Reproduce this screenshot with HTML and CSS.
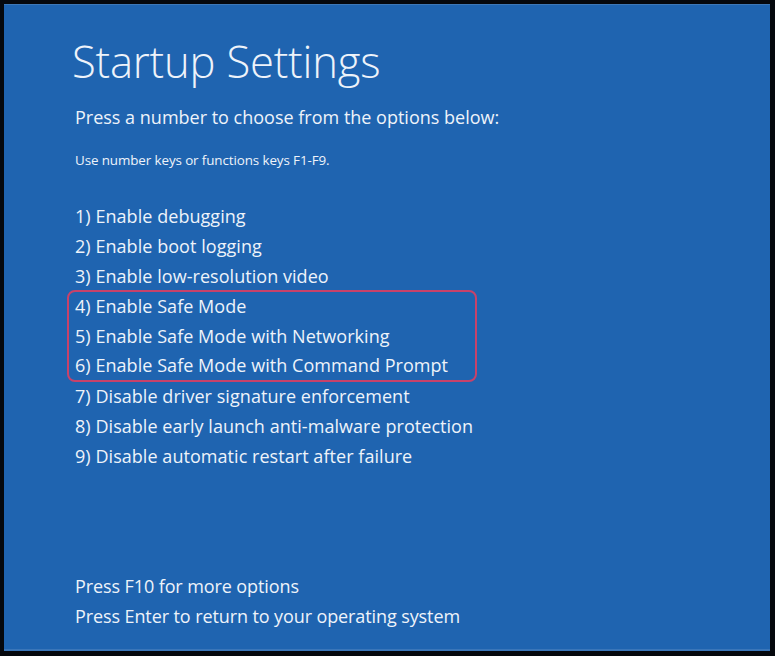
FILE: index.html
```html
<!DOCTYPE html>
<html>
<head>
<meta charset="utf-8">
<link rel="stylesheet" href="styles.css">
</head>
<body>
<div class="screen">
  <h1 class="title">Startup Settings</h1>
  <p class="lead">Press a number to choose from the options below:</p>
  <p class="hint">Use number keys or functions keys F1-F9.</p>
  <div class="options">
    <div class="opt">1) Enable debugging</div>
    <div class="opt">2) Enable boot logging</div>
    <div class="opt">3) Enable low-resolution video</div>
    <div class="hl">
      <div class="opt">4) Enable Safe Mode</div>
      <div class="opt">5) Enable Safe Mode with Networking</div>
      <div class="opt">6) Enable Safe Mode with Command Prompt</div>
    </div>
    <div class="opt">7) Disable driver signature enforcement</div>
    <div class="opt">8) Disable early launch anti-malware protection</div>
    <div class="opt">9) Disable automatic restart after failure</div>
  </div>
  <div class="footer">
    <div class="opt">Press F10 for more options</div>
    <div class="opt">Press Enter to return to your operating system</div>
  </div>
</div>
</body>
</html>
```
FILE: styles.css
```css
html, body {
  margin: 0;
  padding: 0;
  background: #05080d;
  width: 775px;
  height: 656px;
  overflow: hidden;
}
.screen {
  box-sizing: border-box;
  margin: 4px 5px 0 4px;
  width: 766px;
  height: 647px;
  background: #1f64b0;
  border-top: 1px solid #3d78b8;
  border-bottom: 2px solid #3a76b9;
  color: #eef3fa;
  font-family: "Open Sans", "Noto Sans", sans-serif;
  padding: 0 0 0 71px;
  display: flex;
  flex-direction: column;
}
.title {
  margin: 27px 0 0 -3px;
  font-weight: 300;
  font-size: 43.6px;
  line-height: 58px;
  letter-spacing: -0.2px;
}
.lead {
  margin: 14px 0 0 0;
  font-size: 18px;
  line-height: 26px;
}
.hint {
  margin: 21px 0 0 0;
  font-size: 13.4px;
  line-height: 18px;
  letter-spacing: -0.1px;
}
.options {
  margin-top: 32px;
}
.opt {
  font-size: 18px;
  line-height: 30px;
  white-space: nowrap;
}
.options .opt {
  letter-spacing: 0.05px;
}
.footer .opt {
  letter-spacing: -0.1px;
}
.hl {
  box-sizing: border-box;
  width: 410px;
  margin: -1px 0 -1px -8px;
  padding: 0 0 0 6px;
  border: 2px solid #c8426a;
  border-radius: 8px;
}
.hl .opt:first-child { line-height: 29px; }
.hl .opt:last-child { line-height: 29px; }
.footer {
  margin-top: auto;
  margin-bottom: 18px;
}
```
